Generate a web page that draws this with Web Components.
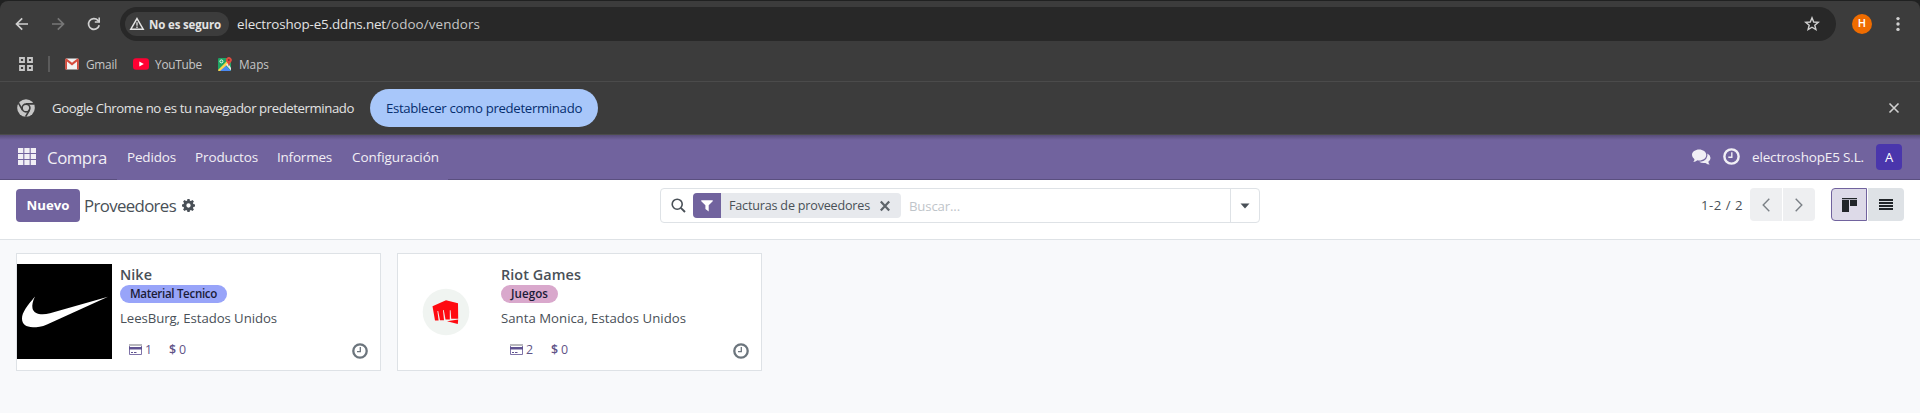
<!DOCTYPE html>
<html lang="es"><head><meta charset="utf-8"><title>Proveedores</title>
<style>
html,body{margin:0;height:413px;overflow:hidden;background:#f8f9fb}
body{font-family:"Open Sans","Noto Sans",sans-serif}
</style></head><body>
<odoo-page></odoo-page>
<script>
const ICONS={
back:['0 0 16 16','<path d="M14 8H3M8.2 2.3 2.5 8l5.7 5.7" fill="none" stroke="currentColor" stroke-width="1.7"/>'],
fwd:['0 0 16 16','<path d="M2 8h11M7.8 2.3 13.5 8l-5.7 5.7" fill="none" stroke="currentColor" stroke-width="1.7"/>'],
reload:['0 0 16 16','<path d="M13.2 9.2A5.4 5.4 0 1 1 11.9 4.3L13.6 6" fill="none" stroke="currentColor" stroke-width="1.7"/><path d="M14 1.6v5.2H8.8V5.2h3.6V1.6z" fill="currentColor"/>'],
warn:['0 0 16 16','<path d="M8 2.6 14.2 13.2H1.8z" fill="none" stroke="currentColor" stroke-width="1.5"/><path d="M8 6.2v3.6M8 10.6v1.4" stroke="currentColor" stroke-width="1.3"/>'],
star:['0 0 16 16','<path d="M8 1.8 9.7 6l4.6.3-3.5 2.9 1.1 4.4L8 11.2l-3.9 2.4 1.1-4.4L1.7 6.3 6.3 6z" fill="none" stroke="currentColor" stroke-width="1.4"/>'],
dots:['0 0 4 16','<circle cx="2" cy="2.6" r="1.7" fill="currentColor"/><circle cx="2" cy="8" r="1.7" fill="currentColor"/><circle cx="2" cy="13.4" r="1.7" fill="currentColor"/>'],
grid4:['0 0 14 14','<path d="M1 1h4v4H1zM9 1h4v4H9zM1 9h4v4H1zM9 9h4v4H9z" fill="none" stroke="currentColor" stroke-width="1.8"/>'],
gmail:['0 0 14 12','<rect x=".5" y=".5" width="13" height="11" rx="1" fill="#f2f2f2"/><path d="M.2 1.2V11.5H2V3.6L7 7.6l5-4v7.9h1.8V1.2Q13.5.3 12.5.5L7 4.8 1.5.5Q.5.3.2 1.2" fill="#d54b3d"/>'],
yt:['0 0 16 12','<rect y=".3" width="16" height="11.4" rx="3" fill="#ff0033"/><path d="M6.3 3.4v5.2L10.8 6z" fill="#fff"/>'],
maps:['0 0 14 14','<rect y="1" width="13" height="13" rx="1.2" fill="#1fa463"/><path d="M1 14 7 8l6 6z" fill="#4a89f3"/><path d="M0 13 9 4l2 2L2 14H1Q0 14 0 13" fill="#fdd34c"/><path d="M7.8 7.8 10 6l3 5v2.5z" fill="#e8e8e8"/><circle cx="3.4" cy="4.4" r="1.5" fill="none" stroke="#fff" stroke-width=".9"/><path d="M10.8 9.5Q10.5 7 8.7 5A2.9 2.9 0 1 1 13 5Q11.200 7 10.800 9.500" fill="#dd4b3e"/><circle cx="10.8" cy="3" r="1" fill="#822f2b"/>'],
chrome:['0 0 18 18','<circle cx="9" cy="9" r="8.8" fill="#c7c7c7"/><circle cx="9" cy="9" r="3.9" fill="none" stroke="#3c3c3c" stroke-width="1.6"/><path d="M9 4.900h8M5.500 11 1.500 4.200M12.500 11 8.600 17.700" stroke="#3c3c3c" stroke-width="1.600"/>'],
x:['0 0 12 12','<path d="M1.5 1.5 10.500 10.500M10.500 1.500 1.500 10.500" stroke="currentColor" stroke-width="1.600"/>'],
xb:['0 0 12 12','<path d="M1.800 1.500 10.200 10.500M10.200 1.500 1.800 10.500" stroke="currentColor" stroke-width="2.200"/>'],
apps:['0 0 17 17','<path d="M0 0h5v5H0zM6 0h5v5H6zM12 0h5v5h-5zM0 6h5v5H0zM6 6h5v5H6zM12 6h5v5h-5zM0 12h5v5H0zM6 12h5v5H6zM12 12h5v5h-5z" fill="currentColor"/>'],
chat:['0 0 20 16','<path d="M7.500.5C11.500.5 15 2.800 15 6s-3.500 5.500-7.500 5.500q-1 0-1.800-.2Q3.600 12.900 1.300 13q1.200-1.200 1.300-2.700Q0 8.500 0 6C0 2.800 3.500.5 7.500.5" fill="currentColor"/><path d="M16.200 4.500Q19.500 6.200 19.500 9q0 2.200-2.300 3.800.2 1.500 1.400 2.700-2.400-.1-4.400-1.600-4 .6-6.700-1.200 5.200-.1 7.500-2.900Q16.700 7.500 16.200 4.500" fill="currentColor"/>'],
clock:['0 0 16 16','<circle cx="8" cy="8" r="6.700" fill="none" stroke="currentColor" stroke-width="2.300"/><path d="M8.300 4v4.700H5" fill="none" stroke="currentColor" stroke-width="1.300"/>'],
gear:['0 0 12 12','<path fill-rule="evenodd" fill="currentColor" d="M5 0h2l.3 1.500 1 .4L9.600 1 11 2.400l-.9 1.300.4 1L12 5v2l-1.500.3-.4 1 .9 1.300L9.600 11l-1.300-.9-1 .4L7 12H5l-.3-1.500-1-.4-1.300.9L1 9.600l.9-1.300-.4-1L0 7V5l1.500-.3.4-1L1 2.400 2.400 1l1.300.9 1-.4zM6 4a2 2 0 1 0 0 4 2 2 0 0 0 0-4"/>'],
search:['0 0 15 15','<circle cx="6.200" cy="6.200" r="5" fill="none" stroke="currentColor" stroke-width="1.600"/><path d="M9.800 9.800 14 14" stroke="currentColor" stroke-width="1.900"/>'],
funnel:['0 0 12 12','<path d="M.3.3h11.400Q12 1 11.500 1.500L7.700 5.300V11.600L4.400 9V5.300L.5 1.500Q0 1 .3.300" fill="currentColor"/>'],
caret:['0 0 10 6','<path d="M.5.5h9L5 5.500z" fill="currentColor"/>'],
left:['0 0 8 14','<path d="M7.300.8 1.200 7l6.100 6.200" fill="none" stroke="currentColor" stroke-width="1.400"/>'],
right:['0 0 8 14','<path d="M.7.8 6.800 7 .7 13.200" fill="none" stroke="currentColor" stroke-width="1.400"/>'],
kanban:['0 0 15 14','<path d="M0 0h15v1.200H0zM0 2h7v12H0zM8 2h7v6H8z" fill="currentColor"/>'],
list:['0 0 14 11','<path d="M0 0h14v1.900H0zM0 3h14v1.900H0zM0 6h14v1.900H0zM0 9h14v1.900H0z" fill="currentColor"/>'],
card:['0 0 13 11','<path d="M.5.5h12v10H.5z" fill="#fff" stroke="#71639e" stroke-width=".9"/><path d="M0 0h13v2H0z" fill="#b9b9bd"/><path d="M0 3h13v2.500H0z" fill="#5f5290"/><path d="M2 8.500h2M5 8.500h2.500" stroke="#5f5290"/>'],
nike:['0 0 95 95','<path d="M0 0h95v95H0z"/><path d="M18 32.500C10 42 5 48.500 5 54.500 5 60 9 63.200 16 63.200c4 0 9-.5 14-2.800L91 32.700 33 49.300c-9 2.500-16.500.5-17.500-5-.6-3.500.2-7 2.500-11.800" fill="#fff"/>'],
riot:['0 0 95 95','<circle cx="48" cy="48" r="23.300" fill="#f0f4f1"/><path d="M48 36.300 34.500 42.300 37 56.500h3.600L39.400 47l.8-.1L42 56.200h4L45 46.200l.8-.1 1.700 9.300h4.300V46.200h.8l.6 8.600h7L60 39.300z" fill="#ff0a10"/><path d="M49 57.300 60.200 55.500 59.800 60z" fill="#ff0a10"/>']};
const define=(name,html,init)=>{const t=document.createElement('template');t.innerHTML=html;
customElements.define(name,class extends HTMLElement{connectedCallback(){if(this.shadowRoot)return;this.attachShadow({mode:'open'}).append(t.content.cloneNode(true));init&&init(this,this.shadowRoot)}})};

/* svg icon: n = name, w/h = size */
define('ui-icon','<style>:host{display:block;flex:none}svg{display:block}</style>',(e,r)=>{const[v,p]=ICONS[e.getAttribute('n')];const b=v.split(' ');
r.innerHTML+=`<svg viewBox="${v}" width="${e.getAttribute('w')||b[2]}" height="${e.getAttribute('h')||b[3]}" preserveAspectRatio="none">${p}</svg>`});
/* one-line label that tracks its letters to fill the width w */
define('ui-text','<style>:host{display:block;flex:none;white-space:nowrap}span{display:inline-block}</style><span><slot></slot></span>',(e,r)=>{const w=+e.getAttribute('w'),s=r.querySelector('span');e.style.width=w+'px';
const n=e.textContent.length;const m=s.getBoundingClientRect().width;if(n>1)s.style.letterSpacing=(w-m)/n+'px'});

define('browser-bar',`<style>
:host{display:block;background:#202121;padding-top:1px;color:#e3e3e3}
.tb{background:#3c3c3c;border-radius:8px 8px 0 0;height:133px;border-bottom:1px solid #4b4b4b}
.row{display:flex;align-items:center}
.nav{height:46px;padding-left:14px;box-sizing:border-box;color:#d0d0d0}
.omni{width:1716px;height:34px;margin-left:17px;border-radius:17px;background:#282828;display:flex;align-items:center;box-sizing:border-box;padding:0 16px 0 5px}
.chip{width:104px;height:24px;border-radius:12px;background:#3c3c3c;display:flex;align-items:center;gap:4px;padding-left:4px;box-sizing:border-box;font-size:11.500px;font-weight:700;margin-right:8px;color:#e3e3e3}
.url{font-size:13.400px;color:#e3e3e3}.path{color:#c7c7c7}
.av{width:20px;height:20px;border-radius:50%;background:#ef6c00;color:#fff;font:500 11px/20px Roboto,sans-serif;text-align:center;margin-left:16px}
.bm{height:34px;border-bottom:1px solid #4b4b4b;font-size:11.800px;padding-left:19px;color:#c7c7c7}
.sep{width:2px;height:16px;background:#5b5b5b;margin:0 15px 0 15px}
.info{height:52px;padding-left:17px;font-size:13.200px}
.btn{height:38px;width:228px;margin-left:17px;border-radius:19px;background:#a8c7fa;color:#062e6f;display:flex;align-items:center;justify-content:center;font-weight:500}
</style><div class="tb">
<div class="row nav"><ui-icon n="back"></ui-icon><ui-icon n="fwd" style="margin-left:20px;color:#777"></ui-icon><ui-icon n="reload" style="margin-left:20px;margin-right:0"></ui-icon>
<div class="omni" style="margin-left:18px"><div class="chip"><ui-icon n="warn"></ui-icon><ui-text w="72">No es seguro</ui-text></div><ui-text class="url" w="149">electroshop-e5.ddns.net</ui-text><ui-text class="url path" w="94">/odoo/vendors</ui-text><ui-icon n="star" style="margin-left:auto"></ui-icon></div>
<div class="av">H</div><ui-icon n="dots" style="margin-left:24px"></ui-icon></div>
<div class="row bm"><ui-icon n="grid4"></ui-icon><div class="sep"></div><ui-icon n="gmail"></ui-icon><ui-text w="31" style="margin-left:7px;margin-top:-1px">Gmail</ui-text><ui-icon n="yt" style="margin-left:16px"></ui-icon><ui-text w="47" style="margin-left:6px;margin-top:-1px">YouTube</ui-text><ui-icon n="maps" style="margin-left:16px"></ui-icon><ui-text w="30" style="margin-left:7px;margin-top:-1px">Maps</ui-text></div>
<div class="row info"><ui-icon n="chrome"></ui-icon><ui-text w="302" style="margin-left:17px">Google Chrome no es tu navegador predeterminado</ui-text><div class="btn" style="margin-left:16px"><ui-text w="196">Establecer como predeterminado</ui-text></div><ui-icon n="x" style="margin-left:auto;margin-right:20px;color:#d0d0d0"></ui-icon></div>
</div>`);

define('app-nav',`<style>
:host{display:flex;align-items:center;height:45px;box-sizing:border-box;padding:0 18px 1px;color:#f1eff5;font-size:13.500px;background:linear-gradient(90deg,#5a4f7f 117px,#71639e 117px 448px,#5a4f7f 448px) 0 100%/100% 1px no-repeat,linear-gradient(#574c78,#71639e 5px)}
ui-text{margin-right:20px;margin-top:-1px}
.av{width:26px;height:26px;border-radius:4px;background:#4a36ac;color:#fff;font-size:13px;line-height:26px;text-align:center;font-weight:500}
</style><ui-icon n="apps" w="18" h="17" style="margin-top:-1px"></ui-icon><ui-text w="60" style="margin-left:11px;font-size:16.800px;margin-top:1px">Compra</ui-text><ui-text w="49" style="margin-right:19px">Pedidos</ui-text><ui-text w="63" style="margin-right:19px">Productos</ui-text><ui-text w="55">Informes</ui-text><ui-text w="87">Configuración</ui-text>
<ui-icon n="chat" w="19" h="16" style="margin-left:auto;margin-top:-1px"></ui-icon><ui-icon n="clock" w="17" h="17" style="margin:-1px 12px 0"></ui-icon><ui-text w="112" style="margin-right:12px">electroshopE5 S.L.</ui-text><div class="av">A</div>`);

define('control-panel',`<style>
:host{display:grid;grid-template-columns:660px 600px 1fr;height:60px;box-sizing:border-box;background:#fff;border-bottom:1px solid #dee2e6;color:#495057;font-size:13.200px;align-items:start;padding-top:8px}
.l,.r,.s,.f{display:flex;align-items:center}
.l{padding-left:16px;height:35px}.new{width:64px;height:33px;border-radius:4px;background:#71639e;color:#fff;font-weight:700;display:flex;align-items:center;justify-content:center}
.s{height:35px;border:1px solid #dee2e6;border-radius:4px;box-sizing:border-box;padding-left:10px}
.f{height:25px;width:208px;background:#e7e9ed;border-radius:4px;margin-left:7px;overflow:hidden}
.fi{width:28px;height:25px;background:#71639e;color:#fff;display:flex;align-items:center;justify-content:center}
.dd{margin-left:auto;width:28px;height:33px;border-left:1px solid #dee2e6;display:flex;align-items:center;justify-content:center}
.r{justify-content:flex-end;padding-right:16px;height:33px}
.b{height:33px;width:32px;background:#eeeff1;color:#7b8086;display:flex;align-items:center;justify-content:center;box-sizing:border-box}
.v{width:36px;color:#212529;background:#dee2e6}
</style><div class="l"><div class="new" style="margin-top:-1px"><ui-text w="43">Nuevo</ui-text></div><ui-text w="92" style="margin-left:4px;font-size:16.800px">Proveedores</ui-text><ui-icon n="gear" w="13" h="13" style="margin-left:6px"></ui-icon></div>
<div class="s"><ui-icon n="search"></ui-icon><div class="f"><div class="fi"><ui-icon n="funnel"></ui-icon></div><ui-text w="141" style="margin-left:8px;font-size:12.600px">Facturas de proveedores</ui-text><ui-icon n="xb" style="margin-left:9px;color:#5f656b"></ui-icon></div><ui-text w="51" style="margin-left:8px;color:#bfc5ca">Buscar...</ui-text><div class="dd"><ui-icon n="caret"></ui-icon></div></div>
<div class="r"><ui-text w="42" style="margin-right:7px">1-2 / 2</ui-text><div class="b" style="border-radius:4px 0 0 4px">
<ui-icon n="left"></ui-icon></div><div class="b" style="margin-left:1px;border-radius:0 4px 4px 0"><ui-icon n="right"></ui-icon></div><div class="b v" style="margin-left:16px;border:1px solid #71639e;border-radius:4px 0 0 4px;background:#dddae8"><ui-icon n="kanban"></ui-icon></div><div class="b v" style="margin-left:1px;border-radius:0 4px 4px 0"><ui-icon n="list"></ui-icon></div></div>`);

define('vendor-card',`<style>
:host{display:grid;grid-template-columns:95px 1fr;column-gap:8px;width:365px;height:118px;box-sizing:border-box;border:1px solid #dee2e6;background:#fff;padding-top:10px;color:#495057;font-size:13.200px}
.b{position:relative;height:95px}
.tag{height:18px;border-radius:9px;padding:0 10px;width:max-content;background:var(--tag);color:#1b1c38;font-size:11.600px;line-height:18px;font-weight:600;margin-bottom:5px}
.st{display:flex;align-items:center;height:20px;margin:11px 0 0 9px;color:#5f5387;font-size:12.400px}
.clk{position:absolute;right:12px;top:79px;color:#6c757d}
</style><slot name="img"></slot><div class="b"><slot name="name"></slot><div class="tag"><slot name="tag"></slot></div><slot name="place"></slot>
<div class="st"><ui-icon n="card"></ui-icon><slot name="stats"></slot></div><ui-icon class="clk" n="clock"></ui-icon></div>`);

define('odoo-page',`<style>:host{display:block;width:1920px}
.k{display:flex;gap:16px;padding:13px 16px}
[slot=name]{font-size:14.400px;font-weight:550;line-height:21px;height:21px}
[slot=place]{line-height:20px}[slot=stats]{margin-left:3px}
</style><browser-bar></browser-bar><app-nav></app-nav><control-panel></control-panel>
<div class="k">
<vendor-card style="--tag:#98a4f9"><ui-icon slot="img" n="nike"></ui-icon><ui-text slot="name" w="32">Nike</ui-text><ui-text slot="tag" w="87">Material Tecnico</ui-text><ui-text slot="place" w="157">LeesBurg, Estados Unidos</ui-text><ui-text slot="stats" w="7">1</ui-text><ui-text slot="stats" w="7" style="font-weight:600;margin-left:17px">$</ui-text><ui-text slot="stats" w="7">0</ui-text></vendor-card>
<vendor-card style="--tag:#d9a8cc"><ui-icon slot="img" n="riot"></ui-icon><ui-text slot="name" w="80">Riot Games</ui-text><ui-text slot="tag" w="37">Juegos</ui-text><ui-text slot="place" w="185">Santa Monica, Estados Unidos</ui-text><ui-text slot="stats" w="7">2</ui-text><ui-text slot="stats" w="7" style="font-weight:600;margin-left:18px">$</ui-text><ui-text slot="stats" w="7">0</ui-text></vendor-card>
</div>`);
</script></body></html>
